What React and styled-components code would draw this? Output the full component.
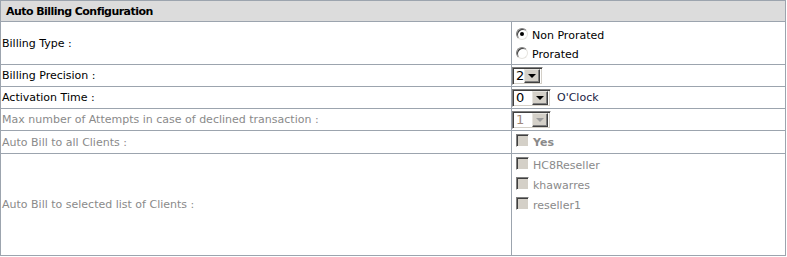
import React from 'react'
import styled, { createGlobalStyle } from 'styled-components'

const GlobalStyle = createGlobalStyle`
  body{
    margin:0;
    background:#fff;
    font-family: "DejaVu Sans", Verdana, sans-serif;
  }
`

const Table = styled.table`
  width:786px;
  border-collapse:collapse;
  border:1px solid #9ca4ae;
  font-size:11px;
  color:#000;
`

const HeadCell = styled.th`
  height:20px;
  padding:0 0 0 5px;
  background:#dcdcdc;
  border-bottom:1px solid #9ca4ae;
  text-align:left;
  font-weight:bold;
  font-size:11px;
  letter-spacing:-0.55px;
`

const Row = styled.tr`
  td{
    height:${p => p.$h}px;
    box-sizing:border-box;
    border-top:1px solid #9ca4ae;
  }
`

const Label = styled.td`
  width:511px;
  padding:0 0 0 1px;
  border-right:1px solid #9ca4ae;
  vertical-align:middle;
  color:${p => (p.$off ? '#8a8a8a' : '#000')};
`

const Value = styled.td`
  padding:${p => p.$pad || '0'};
  vertical-align:${p => p.$top ? 'top' : 'middle'};
`

const Option = styled.div`
  display:flex;
  align-items:center;
  height:${p => p.$h || 20}px;
  gap:4px;
  padding-left:4px;
  color:${p => (p.$off ? '#8a8a8a' : '#000')};
  font-weight:${p => (p.$bold ? 'bold' : 'normal')};
`

const Radio = styled.span`
  box-sizing:border-box;
  width:12px;
  height:12px;
  border-radius:50%;
  border:1px solid;
  border-color:#808080 #e6e4df #e6e4df #808080;
  box-shadow:inset 1px 1px 0 #404040;
  background:#fff;
  display:flex;
  align-items:center;
  justify-content:center;
  margin-top:-4px;
  &::after{
    content:'';
    width:4px;
    height:4px;
    border-radius:50%;
    background:${p => (p.$on ? '#000' : 'transparent')};
  }
`

const Check = styled.span`
  box-sizing:border-box;
  width:13px;
  height:13px;
  background:#d4d0c8;
  border:1px solid;
  border-color:#808080 #fff #fff #808080;
  box-shadow:inset 1px 1px 0 #404040;
  margin-top:-3px;
`

const Combo = styled.div`
  box-sizing:border-box;
  width:${p => p.$w}px;
  height:18px;
  display:inline-flex;
  align-items:center;
  justify-content:space-between;
  border:1px solid;
  border-color:#808080 #fff #fff #808080;
  box-shadow:inset 1px 1px 0 #404040, inset -1px -1px 0 #d4d0c8;
  background:#fff;
  padding:2px 2px 2px 3px;
  font-size:13px;
  color:${p => (p.$off ? '#a0877a' : '#000')};
  vertical-align:middle;
`

const Arrow = styled.span`
  box-sizing:border-box;
  width:16px;
  height:14px;
  background:#d4d0c8;
  border:1px solid;
  border-color:#e6e4df #404040 #404040 #e6e4df;
  box-shadow:inset -1px -1px 0 #808080;
  display:flex;
  align-items:center;
  justify-content:center;
  &::after{
    content:'';
    border-left:4px solid transparent;
    border-right:4px solid transparent;
    border-top:4px solid ${p => (p.$off ? '#9a9a9a' : '#000')};
  }
`

const Suffix = styled.span`
  margin-left:6px;
  vertical-align:middle;
  color:#1a2344;
`

const clients = ['HC8Reseller', 'khawarres', 'reseller1']

export default function App() {
  return (
    <>
      <GlobalStyle />
      <Table>
        <tbody>
          <tr>
            <HeadCell colSpan={2}>Auto Billing Configuration</HeadCell>
          </tr>
          <Row $h={42}>
            <Label>Billing Type :</Label>
            <Value $top $pad="4px 0 0 0">
              <Option $h={19}><Radio $on />Non Prorated</Option>
              <Option $h={19}><Radio />Prorated</Option>
            </Value>
          </Row>
          <Row $h={22}>
            <Label>Billing Precision :</Label>
            <Value>
              <Combo $w={31}>2<Arrow /></Combo>
            </Value>
          </Row>
          <Row $h={22}>
            <Label>Activation Time :</Label>
            <Value>
              <Combo $w={39}>0<Arrow /></Combo>
              <Suffix>O'Clock</Suffix>
            </Value>
          </Row>
          <Row $h={22}>
            <Label $off>Max number of Attempts in case of declined transaction :</Label>
            <Value>
              <Combo $w={39} $off>1<Arrow $off /></Combo>
            </Value>
          </Row>
          <Row $h={23}>
            <Label $off>Auto Bill to all Clients :</Label>
            <Value>
              <Option $off $bold><Check />Yes</Option>
            </Value>
          </Row>
          <Row $h={102}>
            <Label $off>Auto Bill to selected list of Clients :</Label>
            <Value $top $pad="1px 0 0 0">
              {clients.map(c => (
                <Option key={c} $off><Check />{c}</Option>
              ))}
            </Value>
          </Row>
        </tbody>
      </Table>
    </>
  )
}
